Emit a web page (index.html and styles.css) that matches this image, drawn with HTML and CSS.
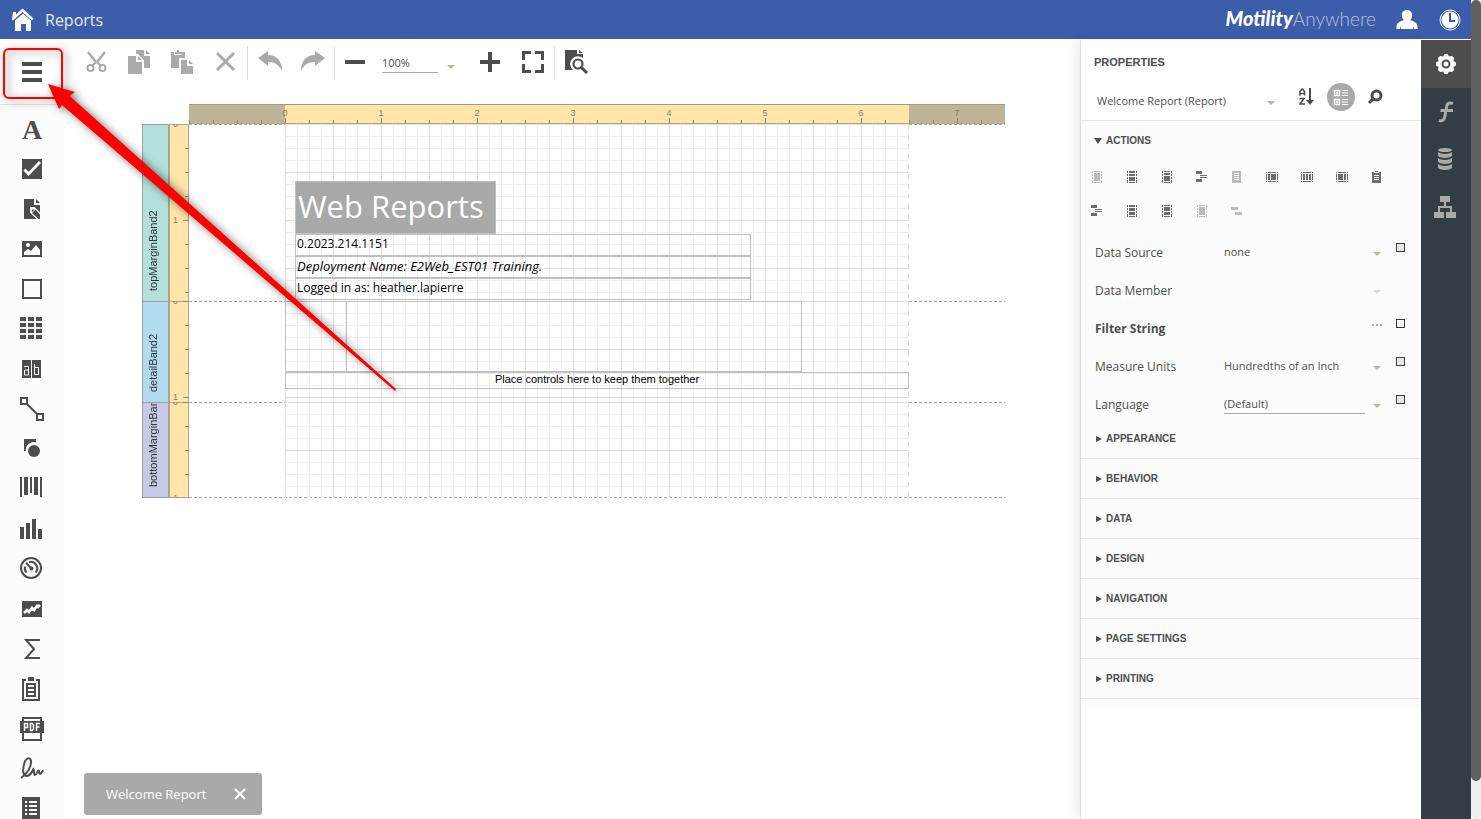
FILE: index.html
```html
<!DOCTYPE html>
<html lang="en">
<head>
<meta charset="UTF-8" />
<meta name="viewport" content="width=device-width, initial-scale=1" />
<title>Reports</title>
<link rel="stylesheet" href="styles.css">
</head>
<body>

<div class="app">
  <header class="topbar">
    <a class="home" href="#" aria-label="Home">
      <svg width="24" height="24" viewBox="0 0 24 24"><path fill="#fff" d="M4 12.500L12 5.500l8 7V23h-5v-7H10v7H4zM1 11.500L2 4h3v2.500L11.500 0.500 22.500 10.500l-1.500 2-9.500-8.500L2 12.500z"/></svg>
    </a>
    <h1>Reports</h1>
    <div class="logo"><b>Motility</b><span>Anywhere</span></div>
    <button class="top-btn" aria-label="User">
      <svg width="22" height="22" viewBox="0 0 22 22"><path fill="#fff" d="M11 1c3.300 0 5.200 2.300 5.200 5.300 0 2-.9 3.800-2.200 4.900 4.200.8 7.500 3 7.500 6.300V20H18v-3l-1 3H5l-1-3v3H.5v-2.500c0-3.300 3.300-5.500 7.500-6.300C6.700 10.100 5.800 8.300 5.800 6.300 5.800 3.300 7.700 1 11 1z"/></svg>
    </button>
    <button class="top-btn" aria-label="Time clock">
      <svg width="22" height="22" viewBox="0 0 22 22"><circle cx="11" cy="11" r="10" fill="none" stroke="#fff" stroke-width="1"/><circle cx="11" cy="11" r="8.500" fill="#fff"/><path d="M11 4v8h5" fill="none" stroke="#3c5daa" stroke-width="2"/></svg>
    </button>
  </header>

  <div class="workspace">
    <nav class="toolbox" aria-label="Toolbox">
      <button class="menu-btn" aria-label="Menu"><svg width="20" height="20" viewBox="0 0 20 20"><path d="M0 0h20v4H0zM0 8h20v4H0zM0 16h20v4H0z"/></svg></button>
      <div class="tools">
        <button aria-label="Label"><svg viewBox="0 0 24 24"><text class="glyph-a" x="12" y="22" text-anchor="middle">A</text></svg></button>
        <button aria-label="Check Box"><svg viewBox="0 0 24 24"><path d="M2 2h20v20H2z"/><path d="M4.500 12.500l4 4.500L20 5" fill="none" stroke="#fff" stroke-width="2.800"/></svg></button>
        <button aria-label="Rich Text"><svg viewBox="0 0 24 24"><path d="M4 2h10v6h6v14H4z"/><path d="M16 2l4 4h-4z"/><path d="M10 10h4.500L20 15.500V22h-3.500L10 15.500z" fill="#fff"/><path d="M12 12.500h2.500l-2.500 2.500zM12 16l3.500-3.500 4.500 5V22h-1.500z"/></svg></button>
        <button aria-label="Picture Box"><svg viewBox="0 0 24 24"><path d="M2 4h20v16H2z"/><circle cx="8" cy="8" r="2" fill="#fff"/><path d="M4 18v-3l4-3 3 2 5-6 4 5v5z" fill="#fff"/></svg></button>
        <button aria-label="Panel"><svg viewBox="0 0 24 24"><path d="M3 3h18v18H3z" fill="none" stroke="#4d4d4d" stroke-width="2"/></svg></button>
        <button aria-label="Table"><svg viewBox="0 0 24 24"><path d="M0 0h6v4H0zM8 0h6v4H8zM16 0h6v4h-6zM0 6h6v4H0zM8 6h6v4H8zM16 6h6v4h-6zM0 12h6v4H0zM8 12h6v4H8zM16 12h6v4h-6zM0 18h6v4H0zM8 18h6v4H8zM16 18h6v4h-6z"/></svg></button>
        <button aria-label="Character Comb"><svg viewBox="0 0 24 24"><path d="M2 3h9v18H2zM12 3h9v18h-9z"/><path d="M4 9.500h4.500v8.500H4.500v-5H8M14.500 7v10.500h4v-7h-4" fill="none" stroke="#fff"/></svg></button>
        <button aria-label="Line"><svg viewBox="0 0 24 24"><path d="M1 1h6v6H1zM17 17h6v6h-6zM7 7l10 10" fill="none" stroke="#4d4d4d" stroke-width="2"/></svg></button>
        <button aria-label="Shape"><svg viewBox="0 0 24 24"><path d="M4 2h12v3.300A8 8 0 0 0 5.800 14H4z"/><circle cx="14" cy="14" r="6"/></svg></button>
        <button aria-label="Barcode"><svg viewBox="0 0 24 24"><path d="M0 0h2v20H0zM4 0h4v18H4zM10 0h2v16h-2zM14 0h4v18h-4zM20 0h2v20h-2z"/></svg></button>
        <button aria-label="Chart"><svg viewBox="0 0 24 24"><path d="M0 10h4v12H0zM6 6h4v16H6zM12 2h4v20h-4zM18 12h4v10h-4z"/></svg></button>
        <button aria-label="Gauge"><svg viewBox="0 0 24 24"><g fill="none" stroke="#4d4d4d" stroke-width="2"><circle cx="11" cy="11" r="10"/><path d="M6.500 15.500a6.300 6.300 0 0 1-1.500-6M9 5.200a6.300 6.300 0 0 1 6.500 10.300M6 6l5 5"/></g><circle cx="11.500" cy="11.500" r="2"/></svg></button>
        <button aria-label="Sparkline"><svg viewBox="0 0 24 24"><path d="M2 4h20v16H2z"/><path d="M4 16l3-3 2 2 3-4 2 2 3-4 1 1 2-2" fill="none" stroke="#fff" stroke-width="2.600"/></svg></button>
        <button aria-label="Pivot Grid"><svg viewBox="0 0 24 24"><path d="M20 3H6l8 9-8 9h14" fill="none" stroke="#4d4d4d" stroke-width="2"/></svg></button>
        <button aria-label="Subreport"><svg viewBox="0 0 24 24"><path d="M6 3H3v20h16V3h-3" fill="none" stroke="#4d4d4d" stroke-width="2"/><path d="M8 0h6v4H8zM6 6h10v14H6z"/><path d="M8 9h6M8 13h6M8 17h6" stroke="#fff" stroke-width="2"/></svg></button>
        <button aria-label="PDF Content"><svg viewBox="0 0 24 24"><path d="M3 1h18v22H3z" fill="none" stroke="#4d4d4d" stroke-width="2"/><path d="M0 4h24v12H0z"/><path d="M4.500 14V6.500h3v4h-3M10.500 6.500H12l1.500 1.500v4L12 13.500h-1.500zM16.500 14V6.500H20M16.500 10h3" fill="none" stroke="#fff" stroke-width="1.500"/></svg></button>
        <button aria-label="PDF Signature"><svg viewBox="0 0 24 24"><path d="M1 21C7 17 11.500 10 11 4c-.4-4-5-3.500-6.500 1.500C2.500 12 2.500 19 6.500 19c3.500 0 5-3 7-7 1.500 1-.5 6 1.500 6s2-4.500 3.500-4.500 0 3.500 1.500 3.500 1.500-3 3.500-3.500" fill="none" stroke="#4d4d4d" stroke-width="2"/></svg></button>
        <button aria-label="Table of Contents"><svg viewBox="0 0 24 24"><path d="M2 0h18v24H2z"/><path d="M5 5h2M9 5h8M5 9h2M9 9h8M5 13h2M9 13h8M5 17h2M9 17h8" stroke="#fff" stroke-width="2"/></svg></button>
      </div>
    </nav>

    <main class="designer">
      <div class="toolbar">
        <button disabled aria-label="Cut"><svg viewBox="0 0 24 24"><path d="M3 2l8 10M20 2l-8 10M11 12l-4 4M12 12l4 4" fill="none" stroke="#aaa" stroke-width="2.400"/><g fill="none" stroke="#aaa" stroke-width="2"><circle cx="5.500" cy="18" r="3"/><circle cx="17.500" cy="18" r="3"/></g></svg></button>
        <button disabled aria-label="Copy"><svg viewBox="0 0 24 24"><path d="M0 6h8v6h6v12H0zM10 6l4 4h-4zM8 0h8v6h6v12h-6v-8l-6-6H8zM18 0l4 4h-4z"/></svg></button>
        <button disabled aria-label="Paste"><svg viewBox="0 0 24 24"><path d="M0 2h3v3h8V2h3v6H8v10H0zM4 2h2V0h2v2h3v2H4zM10 10h6v6h6v8H10zM18 10l4 4h-4z"/></svg></button>
        <button disabled aria-label="Delete"><svg viewBox="0 0 24 24"><path d="M3 3l17 17M20 3L3 20" fill="none" stroke="#aaa" stroke-width="3"/></svg></button>
        <i class="sep"></i>
        <button disabled aria-label="Undo"><svg viewBox="0 0 24 24"><path d="M0 8l10-7v4c9 0 14 6 14 16-3-6-7-9-14-9v4z"/></svg></button>
        <button disabled aria-label="Redo"><svg viewBox="0 0 24 24"><path d="M24 8L14 1v4C5 5 0 11 0 21c3-6 7-9 14-9v4z"/></svg></button>
        <i class="sep"></i>
        <button aria-label="Zoom out"><svg viewBox="0 0 24 24"><path d="M0 10h20v4H0z"/></svg></button>
        <label class="zoom"><select aria-label="Zoom"><option>100%</option></select></label>
        <button aria-label="Zoom in"><svg viewBox="0 0 24 24"><path d="M10 2h4v8h8v4h-8v8h-4v-8H2v-4h8z"/></svg></button>
        <button aria-label="Full screen"><svg viewBox="0 0 24 24"><path d="M1 1h9v3H4v6H1zM14 1h9v9h-3V4h-6zM1 14h3v6h6v3H1zM20 14h3v9h-9v-3h6z"/></svg></button>
        <i class="sep"></i>
        <button aria-label="Preview"><svg viewBox="0 0 24 24"><path d="M0 0h12v4h6v4a7 7 0 0 0-10 12H0z"/><path d="M14 0l4 3h-4z"/><circle cx="13" cy="14" r="4.500" fill="none" stroke="#4d4d4d" stroke-width="2.200"/><path d="M16 17l6 6" stroke="#4d4d4d" stroke-width="3"/></svg></button>
      </div>

      <div class="surface">
        <div class="h-ruler">
          <svg width="816" height="20">
            <defs><pattern id="ticks" width="24" height="20" patternUnits="userSpaceOnUse"><path d="M0 16h1v4H0z" fill="#8f8a78"/></pattern></defs>
            <rect width="816" height="20" fill="url(#ticks)"/>
            <path d="M96.500 14v6M192.500 14v6M288.500 14v6M384.500 14v6M480.500 14v6M576.500 14v6M672.500 14v6M768.500 14v6" stroke="#8f8a78"/>
            <g text-anchor="middle"><text x="96" y="12">0</text><text x="192" y="12">1</text><text x="288" y="12">2</text><text x="384" y="12">3</text><text x="480" y="12">4</text><text x="576" y="12">5</text><text x="672" y="12">6</text><text x="768" y="12">7</text></g>
          </svg>
        </div>

        <section class="band band-top">
          <h2><span>topMarginBand2</span></h2>
          <svg class="v-ruler" width="20" height="177"><path d="M16 24.500h4M16 48.500h4M16 72.500h4M14 96.500h6M16 120.500h4M16 144.500h4M16 168.500h4" stroke="#8f8a78"/><text x="4" y="3">0</text><text x="4" y="99">1</text></svg>
          <div class="band-body">
            <div class="page">
              <div class="ctl title">Web Reports</div>
              <div class="ctl line version">0.2023.214.1151</div>
              <div class="ctl line deployment">Deployment Name: E2Web_EST01 Training.</div>
              <div class="ctl line user">Logged in as: heather.lapierre</div>
            </div>
          </div>
        </section>

        <section class="band band-detail">
          <h2><span>detailBand2</span></h2>
          <svg class="v-ruler" width="20" height="101"><path d="M14 .5h6M16 24.500h4M16 48.500h4M16 72.500h4M14 96.500h6" stroke="#8f8a78"/><text x="4" y="3">0</text><text x="4" y="99">1</text></svg>
          <div class="band-body">
            <div class="page">
              <div class="ctl cell-a"></div>
              <div class="ctl cell-b"></div>
              <div class="ctl keep">Place controls here to keep them together</div>
            </div>
          </div>
        </section>

        <section class="band band-bottom">
          <h2><span>bottomMarginBand2</span></h2>
          <svg class="v-ruler" width="20" height="96"><path d="M14 .5h6M16 24.500h4M16 48.500h4M16 72.500h4M14 95.500h6" stroke="#8f8a78"/><text x="4" y="3">0</text><text x="4" y="99">1</text></svg>
          <div class="band-body"><div class="page"></div></div>
        </section>
      </div>

      <div class="report-tabs">
        <div class="report-tab">
          <a href="#">Welcome Report</a>
          <button aria-label="Close"><svg width="12" height="12" viewBox="0 0 12 12"><path d="M1 1l10 10M11 1L1 11" stroke="#fff" stroke-width="2"/></svg></button>
        </div>
      </div>
    </main>

    <aside class="properties">
      <div class="prop-head">
        <h2>Properties</h2>
        <div class="prop-target">
          <label class="drop"><select aria-label="Selected element"><option>Welcome Report (Report)</option></select></label>
          <button aria-label="Sort alphabetically"><svg width="16" height="18" viewBox="0 0 16 18"><path d="M1 7.500V3.500L3 1h.5l2 2.500v4M1 5.500h4.500M.5 10.500H5L1 16h5" fill="none" stroke="#4d4d4d" stroke-width="1.600"/><path d="M10 0h2v12h3l-4 5-4-5h3z"/></svg></button>
          <button class="active" aria-label="Group by category"><svg width="16" height="18" viewBox="0 0 16 18"><path d="M1.500 2.500h5v5h-5zM1.500 11.500h5v5h-5z" fill="none" stroke="#fff" stroke-width="1.400"/><path d="M2.500 5h3M4 3.500v3M2.500 14h3M4 12.500v3M9 2.500h6M9 5h6M9 7.500h6M9 11.500h6M9 14h6M9 16.500h6" stroke="#fff"/></svg></button>
          <button aria-label="Search"><svg width="16" height="16" viewBox="0 0 16 16"><circle cx="9.500" cy="6.500" r="4.500" fill="none" stroke="#4d4d4d" stroke-width="3"/><path d="M6 10l-4 4" stroke="#4d4d4d" stroke-width="3"/></svg></button>
        </div>
      </div>

      <div class="prop-body">
        <svg class="defs" width="0" height="0" aria-hidden="true">
          <symbol id="frame-v" viewBox="0 0 12 12"><path d="M1 0h1v2H1zM1 3h1v2H1zM1 6h1v2H1zM1 9h1v3H1zM10 0h1v2h-1zM10 3h1v2h-1zM10 6h1v2h-1zM10 9h1v3h-1zM3 0h6v1H3zM3 11h6v1H3z"/></symbol>
          <symbol id="frame-h" viewBox="0 0 12 12"><path d="M0 1h1v1H0zM2 1h8v1H2zM11 1h1v1h-1zM0 10h1v1H0zM2 10h8v1H2zM11 10h1v1h-1zM0 3h1v6H0zM11 3h1v6h-1z"/></symbol>
        </svg>
        <details open>
          <summary>Actions</summary>
          <div class="actions">
            <button disabled aria-label="Fit bounds to container"><svg viewBox="0 0 12 12"><use href="#frame-v"/><path d="M3 2h6v8H3z"/></svg></button>
            <button aria-label="Insert top margin band"><svg viewBox="0 0 12 12"><use href="#frame-v"/><path d="M4 0h4v1H4zM3 1h6v1H3zM3 3h6v2H3zM3 6h6v4H3z"/></svg></button>
            <button aria-label="Insert report header band"><svg viewBox="0 0 12 12"><use href="#frame-v"/><path d="M3 2h6v2H3zM3 5h6v5H3z"/></svg></button>
            <button aria-label="Insert group header band"><svg viewBox="0 0 12 12"><path d="M0 0h6v3H0zM0 8h6v3H0zM4 4h7v1H4zM4 6h7v1H4z"/></svg></button>
            <button disabled aria-label="Insert detail band"><svg viewBox="0 0 12 12"><path d="M1 0h9v12H1zM3 2v1h5V2zM3 4v1h5V4zM3 6v1h5V6zM3 8v1h5V8z" fill-rule="evenodd"/></svg></button>
            <button aria-label="Insert vertical header band"><svg viewBox="0 0 12 12"><use href="#frame-h"/><path d="M2 3h2v6H2zM5 3h5v6H5z"/></svg></button>
            <button aria-label="Insert vertical detail band"><svg viewBox="0 0 12 12"><use href="#frame-h"/><path d="M2 3h2v6H2zM5 3h2v6H5zM8 3h2v6H8z"/></svg></button>
            <button aria-label="Insert vertical total band"><svg viewBox="0 0 12 12"><use href="#frame-h"/><path d="M2 3h5v6H2zM8 3h2v6H8z"/></svg></button>
            <button aria-label="Insert sub-band"><svg viewBox="0 0 12 12"><path d="M1 1h2v1h5V1h2v11H1zM3 4v1h5V4zM3 6v1h5V6zM3 8v1h5V8zM4 0h3v1H4z" fill-rule="evenodd"/></svg></button>
            <button aria-label="Insert group footer band"><svg viewBox="0 0 12 12"><path d="M0 0h6v3H0zM0 8h6v3H0zM4 4h7v1H4zM4 6h7v1H4z"/></svg></button>
            <button aria-label="Insert bottom margin band"><svg viewBox="0 0 12 12"><use href="#frame-v"/><path d="M4 0h4v1H4zM3 1h6v1H3zM3 3h6v3H3zM3 7h6v3H3z"/></svg></button>
            <button aria-label="Insert report footer band"><svg viewBox="0 0 12 12"><use href="#frame-v"/><path d="M3 2h6v4H3zM3 7h6v3H3z"/></svg></button>
            <button disabled aria-label="Insert page footer band"><svg viewBox="0 0 12 12"><use href="#frame-v"/><path d="M3 2h6v8H3z"/></svg></button>
            <button disabled aria-label="Insert detail report"><svg viewBox="0 0 12 12"><path d="M0 2h7v3H0zM4 7h7v3H4z"/></svg></button>
          </div>
        </details>

        <div class="fields">
          <div class="field"><label for="source">Data Source</label><span class="drop"><select id="source"><option>none</option></select></span><input type="checkbox" aria-label="Data Source is default"></div>
          <div class="field"><label for="member">Data Member</label><span class="drop off"><select id="member" disabled><option></option></select></span></div>
          <div class="field strong"><label for="filter">Filter String</label><input type="text" id="filter"><button class="dots" aria-label="Edit filter"><svg width="10" height="2" viewBox="0 0 10 2"><path d="M0 0h2v2H0zM4 0h2v2H4zM8 0h2v2H8z"/></svg></button><input type="checkbox" class="changed" aria-label="Filter String is changed"></div>
          <div class="field"><label for="units">Measure Units</label><span class="drop"><select id="units"><option>Hundredths of an Inch</option></select></span><input type="checkbox" aria-label="Measure Units is default"></div>
          <div class="field"><label for="lang">Language</label><span class="drop lined"><select id="lang"><option>(Default)</option></select></span><input type="checkbox" aria-label="Language is default"></div>
        </div>

        <details><summary>Appearance</summary></details>
        <details><summary>Behavior</summary></details>
        <details><summary>Data</summary></details>
        <details><summary>Design</summary></details>
        <details><summary>Navigation</summary></details>
        <details><summary>Page Settings</summary></details>
        <details><summary>Printing</summary></details>
      </div>
    </aside>

    <nav class="side-tabs" aria-label="Panels">
      <button class="active" aria-label="Properties"><svg viewBox="0 0 24 24"><path d="M10.500 2h3l1.500 2.500L18 4l2 2-.5 3 2.500 1.500v3L19.500 15l.5 3-2 2-3-.5-1.500 2.500h-3L9 19.500 6 20l-2-2 .5-3L2 13.500v-3L4.500 9 4 6l2-2 3 .5z"/><circle cx="12" cy="12" r="3.500" fill="none" stroke="#4d4d4d" stroke-width="2"/></svg></button>
      <button aria-label="Expressions"><svg viewBox="0 0 24 24"><path d="M19 3.500c-4-1.500-6 0-6.500 3.500l-1.500 9c-.6 4-2.500 5.500-6 4.500M6.500 10.500H19" fill="none" stroke="#aaa" stroke-width="3"/></svg></button>
      <button aria-label="Field List"><svg viewBox="0 0 24 24"><ellipse cx="11" cy="2" rx="7" ry="2"/><path d="M4 4c3 2.500 11 2.500 14 0v4c-3 2.500-11 2.500-14 0zM4 10c3 2.500 11 2.500 14 0v4c-3 2.500-11 2.500-14 0zM4 16c3 2.500 11 2.500 14 0v4c-3 2.500-11 2.500-14 0z"/></svg></button>
      <button aria-label="Report Explorer"><svg viewBox="0 0 24 24"><path d="M6 0h10v6H6zM0 16h10v6H0zM12 16h10v6H12z"/><path d="M11 6v5M5 16v-5h12v5" fill="none" stroke="#aaa" stroke-width="2"/></svg></button>
    </nav>
  </div>

  <!-- callout pointing at the menu button -->
  <svg class="callout" width="410" height="400" viewBox="0 0 410 400" aria-hidden="true">
    <rect x="4" y="49" width="58" height="49" rx="5" fill="none" stroke="#f00" stroke-width="2"/>
    <path fill="#f00" d="M48 84l27 8-5.300 4 326.300 293-1 2L62 105l-3 4z"/>
  </svg>
</div>
<div class="scrollbar"><div class="thumb"></div></div>

</body>
</html>
```
FILE: styles.css
```css
* {
  box-sizing: border-box;
}

html, body {
  margin: 0;
  height: 100%;
}

body {
  display: flex;
  overflow: hidden;
  background: #fff;
  color: #4d4d4d;
  font-family: "Open Sans", "Noto Sans", sans-serif;
  font-size: 12px;
}

button, select, input {
  font: inherit;
  color: inherit;
  border: 0;
  padding: 0;
  margin: 0;
  background: none;
}

button {
  display: flex;
  align-items: center;
  justify-content: center;
}

svg {
  display: block;
  fill: #4d4d4d;
}

h1, h2 {
  margin: 0;
  font-weight: normal;
}

.app {
  position: relative;
  flex: 1;
  min-width: 0;
  display: flex;
  flex-direction: column;
}

/* top bar */
.topbar {
  height: 39px;
  margin-bottom: 1px;
  padding: 0 10px 0 11px;
  display: flex;
  align-items: center;
  background: #3c5daa;
  color: #e4e9f5;
}

.topbar h1 {
  flex: 1;
  margin-left: 10px;
  font-size: 16px;
}

.logo {
  font-family: Lato, sans-serif;
  font-size: 19px;
  line-height: 36px;
  height: 39px;
  margin-right: 20px;
}

.logo b {
  font-size: 20px;
  font-weight: 900;
  font-style: italic;
  color: #fff;
}

.logo span {
  font-weight: 300;
  color: #b9c2d8;
}

.top-btn + .top-btn {
  margin-left: 21px;
}

.workspace {
  flex: 1;
  min-height: 0;
  display: flex;
}

/* toolbox */
.toolbox {
  width: 64px;
  background: #fcfcfc;
  overflow: hidden;
}

.menu-btn {
  width: 64px;
  height: 65px;
  background: #fff;
  border-bottom: 1px solid #e5e5e5;
}

.tools {
  padding-top: 4px;
}

.tools button {
  width: 64px;
  height: 40px;
}

.tools svg, .toolbar svg, .side-tabs svg {
  width: 24px;
  height: 24px;
  overflow: visible;
}

.glyph-a {
  font: bold 28px "Liberation Serif", serif;
}

/* designer */
.designer {
  flex: 1;
  min-width: 0;
  display: flex;
  flex-direction: column;
}

.toolbar {
  display: flex;
  align-items: center;
  height: 46px;
  padding-left: 11px;
}

.toolbar button {
  width: 43px;
  height: 43px;
  padding-bottom: 2px;
}

.toolbar button:disabled svg {
  fill: #aaa;
}

.sep {
  width: 1px;
  height: 34px;
  background: #ddd;
}

.zoom, .drop {
  position: relative;
  display: flex;
}

.zoom::after, .drop::after {
  content: "";
  position: absolute;
  right: 13px;
  top: 50%;
  border: 4px solid transparent;
  border-top-color: #b5b99f;
  border-bottom: 0;
}

.zoom::after {
  top: 60%;
}

select {
  appearance: none;
  outline: 0;
  flex: 1;
  min-width: 0;
  opacity: 1;
}

.zoom {
  width: 90px;
  padding: 0 30px 0 4px;
  font-size: 11px;
}

.zoom select {
  height: 20px;
  border-bottom: 1px solid #aaa;
}

.surface {
  flex: 1;
  min-height: 0;
  overflow: hidden;
  padding: 18px 0 0 78px;
}

.h-ruler {
  width: 816px;
  height: 20px;
  margin-left: 47px;
  background: linear-gradient(90deg, #bfb495 96px, #ffe6a8 96px 720px, #bfb495 720px);
  box-shadow: inset 0 1px #a09a80, inset 0 -1px #b3a988;
}

.h-ruler text, .v-ruler text {
  font: 9px "Liberation Sans", sans-serif;
  fill: #84806f;
}

.band {
  display: flex;
  width: 863px;
}

.band h2 {
  width: 27px;
  display: flex;
  align-items: center;
  padding-left: 4px;
  border: 1px solid #a0a0a0;
  border-bottom: 0;
  font: 11px "Liberation Sans", sans-serif;
  color: #333;
  overflow: hidden;
}

.band h2 span {
  writing-mode: vertical-rl;
  transform: rotate(180deg);
  height: 100%;
  padding-top: 10px;
  white-space: nowrap;
}

.band-top { height: 177px; }
.band-top h2 { background: #b3e0da; }
.band-detail { height: 101px; }
.band-detail h2 { background: #b3dbef; }
.band-bottom { height: 96px; }
.band-bottom h2 { background: #c5cae6; }
.band-bottom h2, .band-bottom .v-ruler { border-bottom: 1px solid #a0a0a0; }

.v-ruler {
  background: #ffe6a8;
  box-shadow: inset 1px 0 #b3a988, inset -1px 0 #b3a988, inset 0 1px #b3a988;
  overflow: hidden;
}

.band-body {
  flex: 1;
  padding: 0 96px;
  background: repeating-linear-gradient(90deg, #a8a8a8 0 3px, transparent 3px 5px) 0 0 / 100% 1px no-repeat;
}

.band-bottom .band-body {
  background:
    repeating-linear-gradient(90deg, #a8a8a8 0 3px, transparent 3px 5px) 0 0 / 100% 1px no-repeat,
    repeating-linear-gradient(90deg, #a8a8a8 0 3px, transparent 3px 5px) 0 100% / 100% 1px no-repeat;
}

/* 12px minor grid, 48px major grid */
.page {
  position: relative;
  height: 100%;
  background:
    repeating-linear-gradient(#ddd 0 5px, transparent 5px 10px) 100% 0 / 1px 100% no-repeat,
    linear-gradient(90deg, #ddd 1px, transparent 1px) 0 0 / 48px 48px,
    linear-gradient(transparent 47px, #ddd 47px) 0 1px / 48px 48px,
    linear-gradient(90deg, #efefef 1px, transparent 1px) 0 0 / 12px 12px,
    linear-gradient(transparent 11px, #efefef 11px) 0 1px / 12px 12px;
}

.ctl {
  position: absolute;
  border: 1px solid #c0c0c0;
  color: #000;
}

.title {
  left: 10px;
  top: 57px;
  width: 201px;
  height: 53px;
  padding-left: 2px;
  background: #a9a9a9;
  color: #fff;
  font-size: 31px;
  line-height: 49px;
}

.line {
  left: 10px;
  width: 456px;
  height: 22px;
  padding-left: 1px;
  font-size: 12px;
  line-height: 18px;
}

.version { top: 110px; }
.deployment { top: 132px; font-size: 13px; font-style: italic; }
.user { top: 154px; }

.cell-a { left: 0; top: 0; width: 62px; height: 71px; }
.cell-b { left: 61px; top: 0; width: 456px; height: 71px; }

.keep {
  left: 0;
  top: 71px;
  width: 624px;
  height: 17px;
  font: 11px/13px "Liberation Sans", sans-serif;
  text-align: center;
}

.report-tabs {
  padding: 0 20px 4px;
  display: flex;
}

.report-tab {
  height: 42px;
  padding: 0 16px 0 22px;
  display: flex;
  align-items: center;
  gap: 28px;
  border-radius: 3px;
  background: #a9a9a9;
}

.report-tab a {
  color: #fff;
  font-size: 13px;
  text-decoration: none;
}

/* properties */
.properties {
  width: 341px;
  border-left: 1px solid #ddd;
  box-shadow: -4px 0 12px rgba(0, 0, 0, 0.08);
  background: #fff;
}

.prop-head {
  height: 81px;
  border-bottom: 1px solid #e5e5e5;
}

.prop-head h2, summary {
  font: bold 11px "Liberation Sans", sans-serif;
  text-transform: uppercase;
}

.prop-head h2 {
  padding: 16px 13px 0;
}

.prop-target {
  display: flex;
  align-items: center;
  height: 57px;
  padding: 0 32px 0 16px;
}

.prop-target .drop {
  flex: 1;
  height: 20px;
  margin-top: 8px;
  font-size: 11px;
}

.prop-target .drop::after {
  right: 12px;
}

.prop-target button {
  width: 28px;
  height: 28px;
  margin-left: 6px;
}

.prop-target button.active {
  border-radius: 50%;
  background: #a9a9a9;
}

.prop-body {
  background: #fcfcfc;
  padding-bottom: 10px;
}

.defs {
  position: absolute;
}

summary {
  display: flex;
  align-items: center;
  height: 39px;
  padding-left: 15px;
  font-size: 10px;
}

summary::before {
  content: "";
  border: 3px solid transparent;
  border-left: 6px solid #4d4d4d;
  border-right: 0;
  margin-right: 4px;
}

details[open] summary {
  padding-left: 13px;
}

details[open] summary::before {
  border: 4px solid transparent;
  border-top: 6px solid #4d4d4d;
  border-bottom: 0;
}

details:not([open]) {
  border-bottom: 1px solid #e5e5e5;
}

.actions {
  display: grid;
  grid-template-columns: repeat(9, 35px);
  grid-auto-rows: 34px;
  padding-bottom: 5px;
}

.actions button {
  padding-right: 3px;
}

.actions svg {
  width: 12px;
  height: 12px;
  fill: #6b6b6b;
}

.actions button:disabled svg {
  fill: #bbb;
}

.fields {
  margin-bottom: -4px;
}

.field {
  display: flex;
  align-items: center;
  height: 38px;
  padding: 0 16px 0 14px;
}

.field label {
  width: 129px;
  font-size: 12px;
}

.field .drop {
  flex: 1;
  height: 20px;
  padding-right: 31px;
  font-size: 11px;
}

.field .drop::after {
  right: 15px;
}

.field .drop select {
  padding-bottom: 1px;
}

.field.strong label {
  font-weight: bold;
}

.off::after {
  opacity: 0.5;
}

.off {
  margin-right: 9px;
}

.field .lined select {
  border-bottom: 1px solid #aaa;
}

.field input[type="text"] {
  flex: 1;
  min-width: 0;
}

.dots {
  width: 10px;
  height: 20px;
  margin: 0 14px 6px 0;
}

.dots svg {
  fill: #aaa;
}

.field input[type="checkbox"] {
  appearance: none;
  width: 9px;
  height: 9px;
  margin-bottom: 10px;
  border: 1px solid #333e44;
  background: #e8e8e8;
}

.field input.changed {
  background: #fff;
}

/* panel switcher */
.side-tabs {
  width: 50px;
  background: #333e44;
}

.side-tabs button {
  width: 50px;
  height: 48px;
}

.side-tabs svg {
  fill: #aaa;
}

.side-tabs .active {
  background: #4d4d4d;
}

.side-tabs .active svg {
  fill: #fff;
}

.callout {
  position: absolute;
  left: 0;
  top: 0;
  pointer-events: none;
  filter: drop-shadow(3px 2px 4px rgba(0, 0, 0, 0.55));
}

.scrollbar {
  width: 10px;
  background: #eee;
  border-radius: 0 0 5px 5px;
}

.scrollbar .thumb {
  height: 95.4%;
  border-radius: 5px;
  background: #606060;
}
```
